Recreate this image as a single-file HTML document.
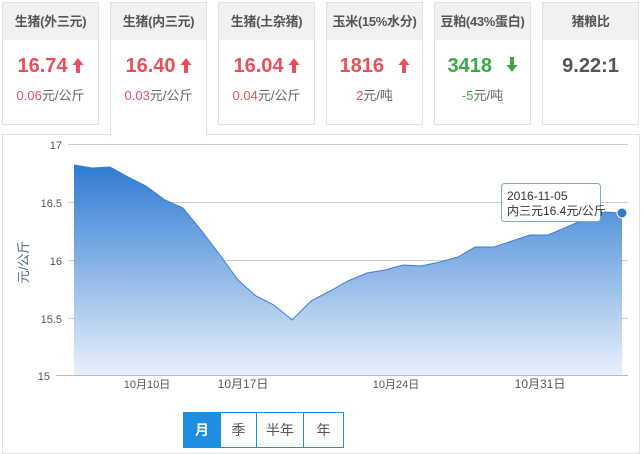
<!DOCTYPE html>
<html><head><meta charset="utf-8"><style>
body{margin:0;width:644px;height:447px;background:#fff;font-family:"Liberation Sans","Noto Sans CJK SC",sans-serif;position:relative;overflow:hidden}
.card{position:absolute;top:2px;width:97px;height:123px;border:1px solid #e2e2e2;box-sizing:border-box;background:#fff;text-align:center}
.card .h{height:37px;background:#f1f1f1;font-size:13px;font-weight:bold;color:#555;line-height:37px;white-space:nowrap;letter-spacing:-0.3px}
.card .v{font-size:20px;font-weight:bold;margin-top:13px;height:26px;line-height:26px}
.card .s{font-size:13px;color:#666;margin-top:6px}
.r{color:#e8505b}.g{color:#3aa845}
.sel{height:135px;border-bottom:none;z-index:2}
.panel{position:absolute;left:2px;top:134px;width:638px;height:320px;border:1px solid #e2e2e2;box-sizing:border-box}
.btns{position:absolute;top:412px;left:183px;height:36px;display:flex;border:1px solid #1e8ee0;box-sizing:border-box}
.btns div{height:34px;line-height:34px;text-align:center;font-size:14px;color:#555;border-left:1px solid #1e8ee0}
svg.a{vertical-align:-1px;margin-left:4px}
</style></head><body>
<div class="panel"></div>
<div class="card" style="left:2px"><div class="h">生猪(外三元)</div><div class="v r">16.74<svg class="a" width="12" height="16" viewBox="0 0 12 16"><path d="M6 1 L11.5 8 H8 V16 H4 V8 H0.5 Z" fill="#e8505b"/></svg></div><div class="s"><span class="r">0.06</span>元/公斤</div></div>
<div class="card sel" style="left:110px"><div class="h">生猪(内三元)</div><div class="v r">16.40<svg class="a" width="12" height="16" viewBox="0 0 12 16"><path d="M6 1 L11.5 8 H8 V16 H4 V8 H0.5 Z" fill="#e8505b"/></svg></div><div class="s"><span class="r">0.03</span>元/公斤</div></div>
<div class="card" style="left:218px"><div class="h">生猪(土杂猪)</div><div class="v r">16.04<svg class="a" width="12" height="16" viewBox="0 0 12 16"><path d="M6 1 L11.5 8 H8 V16 H4 V8 H0.5 Z" fill="#e8505b"/></svg></div><div class="s"><span class="r">0.04</span>元/公斤</div></div>
<div class="card" style="left:326px"><div class="h">玉米(15%水分)</div><div class="v r">1816 <svg class="a" style="margin-left:8px" width="12" height="16" viewBox="0 0 12 16"><path d="M6 1 L11.5 8 H8 V16 H4 V8 H0.5 Z" fill="#e8505b"/></svg></div><div class="s"><span class="r">2</span>元/吨</div></div>
<div class="card" style="left:434px"><div class="h">豆粕(43%蛋白)</div><div class="v g">3418 <svg class="a" style="margin-left:8px" width="12" height="16" viewBox="0 0 12 16"><path d="M6 15 L11.5 8 H8 V0 H4 V8 H0.5 Z" fill="#3aa845"/></svg></div><div class="s"><span class="g">-5</span>元/吨</div></div>
<div class="card" style="left:542px"><div class="h">猪粮比</div><div class="v" style="color:#555">9.22:1</div></div>
<svg style="position:absolute;left:0;top:0" width="644" height="447">
<defs><linearGradient id="gr" x1="0" y1="0" x2="0" y2="1"><stop offset="0" stop-color="#2f7bd3"/><stop offset="1" stop-color="#e8f0fa"/></linearGradient></defs>
<g stroke="#ccc" stroke-width="1">
<line x1="68" y1="144.5" x2="628" y2="144.5"/><line x1="68" y1="202.5" x2="628" y2="202.5"/><line x1="68" y1="260.5" x2="628" y2="260.5"/><line x1="68" y1="318.5" x2="628" y2="318.5"/><line x1="56" y1="375.5" x2="628" y2="375.5" stroke="#bbb"/>
</g>
<path d="M74,165 L92,168 110,167 128,177 146,186 165,200 183,208 201,230 220,255 238,280 256,296 274,305 292,320 311,301 330,291 348,281 367,273 385,270 403,265 421,266 440,262 458,257 475,247 494,247 512,241 530,235 548,235 567,227 585,219 604,212 622,213 L622,375 L74,375 Z" fill="url(#gr)"/>
<path d="M74,165 L92,168 110,167 128,177 146,186 165,200 183,208 201,230 220,255 238,280 256,296 274,305 292,320 311,301 330,291 348,281 367,273 385,270 403,265 421,266 440,262 458,257 475,247 494,247 512,241 530,235 548,235 567,227 585,219 604,212 622,213" fill="none" stroke="#3d7fcf" stroke-width="1"/>
<circle cx="622" cy="213" r="5" fill="#2f7bd3" stroke="#fff" stroke-width="1"/>
<g font-family="Liberation Sans,sans-serif" font-size="11" fill="#555" text-anchor="end">
<text x="62" y="149">17</text><text x="62" y="207">16.5</text><text x="62" y="265">16</text><text x="62" y="323">15.5</text><text x="50" y="380">15</text></g>
<g font-family="Liberation Sans,Noto Sans CJK SC,sans-serif" font-size="11" fill="#555" text-anchor="middle">
<text x="147" y="388">10月10日</text><text x="243" y="388" font-size="12">10月17日</text><text x="396" y="388">10月24日</text><text x="540" y="388" font-size="12">10月31日</text></g>
<text transform="translate(28,262) rotate(-90)" text-anchor="middle" font-size="13" fill="#4a6a8f" font-family="Liberation Sans,Noto Sans CJK SC,sans-serif">元/公斤</text>
<rect x="501.5" y="183.5" width="99" height="38" rx="3" fill="#fff" fill-opacity="0.95" stroke="#7fa7d8"/>
<text x="507" y="200" font-size="12" fill="#333" font-family="Liberation Sans,Noto Sans CJK SC,sans-serif">2016-11-05</text>
<text x="507" y="215" font-size="12" fill="#333" font-family="Liberation Sans,Noto Sans CJK SC,sans-serif">内三元16.4元/公斤</text>
</svg>
<div class="btns"><div style="width:36px;background:#1e8ee0;color:#fff;font-weight:bold;border-left:none">月</div><div style="width:35px">季</div><div style="width:46px">半年</div><div style="width:39px">年</div></div>
</body></html>
